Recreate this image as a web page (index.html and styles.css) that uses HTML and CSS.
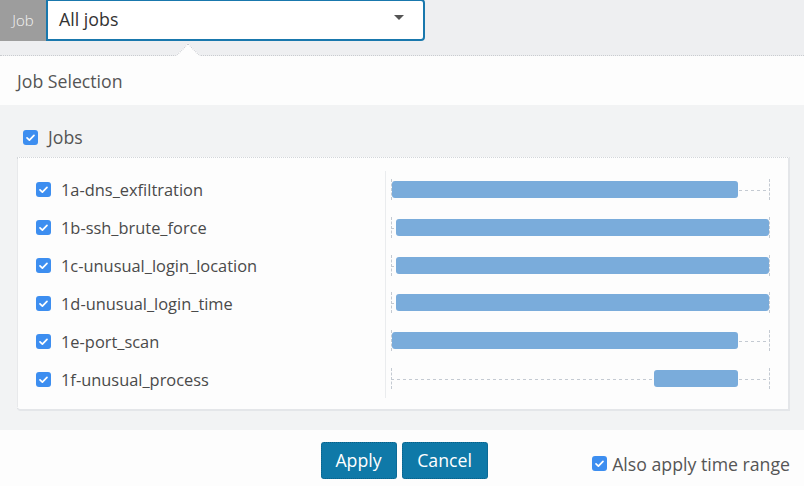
FILE: index.html
```html
<!DOCTYPE html>
<html>
<head>
<meta charset="utf-8">
<link rel="stylesheet" href="styles.css">
</head>
<body>
<div class="topbar">
  <div class="job-label">Job</div>
  <div class="job-select">
    <span class="job-value">All jobs</span>
    <span class="caret"></span>
  </div>
  <div class="notch"></div>
</div>
<div class="pop-header">Job Selection</div>
<div class="section">
  <label class="all-row">
    <span class="cb"><svg viewBox="0 0 15 15"><path d="M4 7.8l2.4 2.4L11 5.4" /></svg></span>
    <span class="all-text">Jobs</span>
  </label>
  <div class="card">
    <div class="names">
      <div class="row"><span class="cb"><svg viewBox="0 0 15 15"><path d="M4 7.8l2.4 2.4L11 5.4" /></svg></span><span class="name">1a-dns_exfiltration</span></div>
      <div class="row"><span class="cb"><svg viewBox="0 0 15 15"><path d="M4 7.8l2.4 2.4L11 5.4" /></svg></span><span class="name">1b-ssh_brute_force</span></div>
      <div class="row"><span class="cb"><svg viewBox="0 0 15 15"><path d="M4 7.8l2.4 2.4L11 5.4" /></svg></span><span class="name">1c-unusual_login_location</span></div>
      <div class="row"><span class="cb"><svg viewBox="0 0 15 15"><path d="M4 7.8l2.4 2.4L11 5.4" /></svg></span><span class="name">1d-unusual_login_time</span></div>
      <div class="row"><span class="cb"><svg viewBox="0 0 15 15"><path d="M4 7.8l2.4 2.4L11 5.4" /></svg></span><span class="name">1e-port_scan</span></div>
      <div class="row"><span class="cb"><svg viewBox="0 0 15 15"><path d="M4 7.8l2.4 2.4L11 5.4" /></svg></span><span class="name">1f-unusual_process</span></div>
    </div>
    <div class="timeline">
      <div class="track"><span class="bar" style="margin-left:1px;width:346px"></span></div>
      <div class="track"><span class="bar" style="margin-left:5px;width:373px"></span></div>
      <div class="track"><span class="bar" style="margin-left:5px;width:373px"></span></div>
      <div class="track"><span class="bar" style="margin-left:5px;width:373px"></span></div>
      <div class="track"><span class="bar" style="margin-left:1px;width:346px"></span></div>
      <div class="track"><span class="bar" style="margin-left:263px;width:84px"></span></div>
    </div>
  </div>
</div>
<div class="footer">
  <div></div>
  <div class="buttons">
    <button class="btn apply">Apply</button>
    <button class="btn cancel">Cancel</button>
  </div>
  <label class="time-range">
    <span class="cb"><svg viewBox="0 0 15 15"><path d="M4 7.8l2.4 2.4L11 5.4" /></svg></span>
    <span>Also apply time range</span>
  </label>
</div>
</body>
</html>
```
FILE: styles.css
```css
* { box-sizing: border-box; }
html, body { margin: 0; padding: 0; }
body {
  width: 804px;
  height: 486px;
  overflow: hidden;
  background: #fdfdfd;
  font-family: "Open Sans", "Noto Sans", sans-serif;
  color: #4a4a4a;
}
.topbar {
  position: relative;
  height: 56px;
  background: #eeeff1;
  border-bottom: 1px dotted #c9ccd0;
  display: flex;
  align-items: flex-start;
}
.job-label {
  width: 46px;
  height: 41px;
  background: #9d9d9d;
  color: #f4f4f4;
  font-size: 15px;
  font-weight: 300;
  display: flex;
  align-items: center;
  justify-content: center;
  padding-bottom: 1px;
}
.job-select {
  width: 379px;
  height: 42px;
  margin-top: -1px;
  background: #fff;
  border: 2px solid #1978ad;
  border-radius: 0 4px 4px 0;
  display: flex;
  align-items: center;
  justify-content: space-between;
  padding: 0 19px 2px 11px;
}
.job-value {
  font-size: 17.8px;
  color: #333;
}
.caret {
  width: 0;
  height: 0;
  border-left: 5.5px solid transparent;
  border-right: 5.5px solid transparent;
  border-top: 5px solid #555;
  margin-bottom: 4px;
}
.notch {
  position: absolute;
  left: 179px;
  top: 47px;
  width: 18px;
  height: 18px;
  background: #fdfdfd;
  border-left: 1px dotted #c9ccd0;
  border-top: 1px dotted #c9ccd0;
  transform: rotate(45deg);
}
.pop-header {
  position: relative;
  height: 49px;
  padding: 0 17px;
  display: flex;
  align-items: center;
  font-size: 17.7px;
  color: #555;
  background: #fdfdfd;
}
.section {
  height: 325px;
  background: #f2f3f4;
  padding: 23px 14px 19px 17px;
}
.all-row {
  display: flex;
  align-items: center;
  gap: 10px;
  padding-left: 6px;
  height: 18px;
  margin-bottom: 11px;
}
.all-text {
  font-size: 17.7px;
  color: #555;
}
.cb {
  width: 15px;
  height: 15px;
  border-radius: 3px;
  background: #3d8ef0;
  display: inline-flex;
  flex: none;
}
.cb svg {
  width: 15px;
  height: 15px;
}
.cb path {
  fill: none;
  stroke: #fff;
  stroke-width: 1.7;
  stroke-linecap: round;
  stroke-linejoin: round;
}
.card {
  height: 254px;
  background: #fdfdfd;
  border-left: 1px dotted #d3d6da;
  border-top: 1px dotted #d3d6da;
  border-right: 2px solid #e4e6e9;
  border-bottom: 2px solid #e4e6e9;
  border-radius: 0 0 0 4px;
  display: flex;
  padding: 13px 18px 11px 0;
}
.names {
  width: 369px;
  display: flex;
  flex-direction: column;
}
.row {
  height: 38px;
  display: flex;
  align-items: center;
  gap: 10px;
  padding-left: 18px;
}
.name {
  font-size: 16.4px;
  color: #4a4a4a;
}
.timeline {
  flex: 1;
  border-left: 1px solid #eaecee;
  display: flex;
  flex-direction: column;
  padding-left: 5px;
}
.track {
  position: relative;
  height: 38px;
  width: 379px;
  display: flex;
  align-items: center;
  background: linear-gradient(to right, #c4cad2 50%, transparent 50%) repeat-x;
  background-size: 6px 1px;
  background-position: 0 19px;
}
.track::before, .track::after {
  content: "";
  position: absolute;
  top: 8px;
  height: 21px;
  border-left: 1px dashed #c4cad2;
}
.track::before { left: 0; }
.track::after { right: 0; }
.bar {
  position: relative;
  z-index: 1;
  height: 17px;
  background: #7aacdb;
  border-radius: 3px;
  flex: none;
  margin-top: -1px;
}
.footer {
  height: 56px;
  background: #fdfdfd;
  display: grid;
  grid-template-columns: 1fr auto 1fr;
  padding: 12px 14px 0 18px;
}
.buttons {
  display: flex;
  gap: 5px;
  align-items: flex-start;
}
.btn {
  height: 37px;
  background: #0f79a8;
  color: #fff;
  border: 1px dotted #0a5f86;
  border-radius: 3px;
  font-family: "Open Sans", "Noto Sans", sans-serif;
  font-size: 17.7px;
  padding: 0 0 2px;
}
.apply { width: 76px; }
.cancel { width: 86px; }
.time-range {
  justify-self: end;
  display: flex;
  align-items: center;
  gap: 5px;
  font-size: 17.7px;
  color: #555;
  margin-top: 13px;
  height: 17px;
}
```
